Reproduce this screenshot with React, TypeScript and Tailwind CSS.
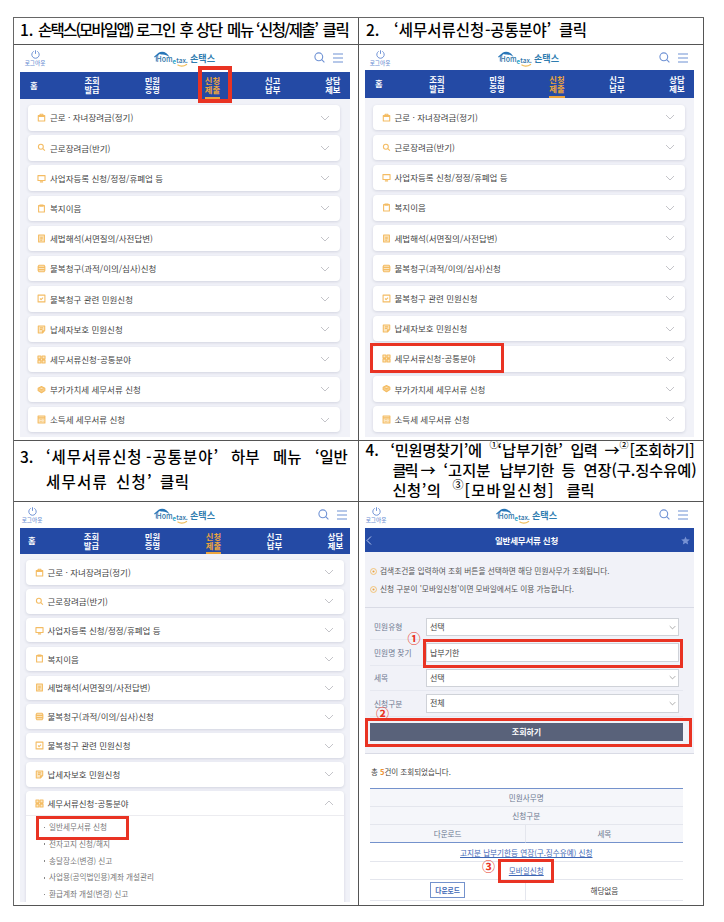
import React from 'react';
import { clsx } from 'clsx';

const MENU = [
  '근로 · 자녀장려금(정기)',
  '근로장려금(반기)',
  '사업자등록 신청/정정/휴폐업 등',
  '복지이음',
  '세법해석(서면질의/사전답변)',
  '불복청구(과적/이의/심사)신청',
  '불복청구 관련 민원신청',
  '납세자보호 민원신청',
  '세무서류신청-공통분야',
  '부가가치세 세무서류 신청',
  '소득세 세무서류 신청',
];

const TABS = [
  ['조회', '발급'],
  ['민원', '증명'],
  ['신청', '제출'],
  ['신고', '납부'],
  ['상담', '제보'],
];

const SUB_MENU = [
  '일반세무서류 신청',
  '전자고지 신청/해지',
  '송달장소(변경) 신고',
  '사업용(공익법인용)계좌 개설관리',
  '환급계좌 개설(변경) 신고',
];

const TINT = '#fbe6c2';

const MENU_ICONS: React.ReactNode[] = [
  <path d="M2 4h10v8.500H2zM4.800 4V2h4.400v2M2 5.500h10" />,
  <path d="M6 2a3.800 3.800 0 1 0 0 7.600a3.800 3.800 0 0 0 0-7.600M9 8.700l3.300 3.300" />,
  <path d="M1.500 2.500h11v7.500h-11zM4.500 12.300h5" />,
  <path d="M2.500 2.500h9v10h-9zM4.500 1.500h5v1.800h-5z" />,
  <path fill={TINT} d="M2.500 1.500h9v11h-9zM5 5h4M5 7.300h4M5 9.600h3" />,
  <path fill={TINT} d="M3 2h8l1.200 2v6L11 12H3l-1.200-2V4zM2 5.300h10M2 8.700h10" />,
  <path d="M1.700 1.700h10.600v10.600H1.700zM4.700 7l1.700 1.700 3-3" />,
  <path fill={TINT} d="M2 1.500h10v7l-3.500 4H2zM4.500 4.500h5M4.500 7h4M8.500 12V9H12" />,
  <path fill={TINT} d="M1.500 1.500H6V6H1.500zM8 1.500h4.500V6H8zM1.500 8H6v4.500H1.500zM8 8h4.500v4.500H8z" />,
  <path fill="#f8cd86" d="M7 2.500l5.200 2.700v3.600L7 12 1.800 8.800V5.200zM4 5.600L7 7.500l3-1.900" />,
  <path fill={TINT} d="M1.700 1.500h10.600v11H1.700zM2 4.500h10M4.500 7h1M7 7h1M9.500 7h.5M4.500 10h1M7 10h1M9.500 10h.5" />,
];

const MenuIcon: React.FC<{ index: number }> = ({ index }) => (
  <svg className="h-[9px] w-[9px] shrink-0 text-[#f4bc63]" viewBox="0 0 14 14" fill="none" stroke="currentColor" strokeWidth={1.7} strokeLinejoin="round">
    {MENU_ICONS[index]}
  </svg>
);

const Chevron: React.FC<{ up?: boolean; className?: string }> = ({ up, className }) => (
  <svg className={clsx('shrink-0', className, up && 'rotate-180')} viewBox="0 0 10 6" fill="none" stroke="currentColor" strokeWidth={1}>
    <path d="M1 1l4 4 4-4" />
  </svg>
);

const Logo: React.FC = () => (
  <svg className="h-[18px] w-[62px] shrink-0" viewBox="0 0 62 18">
    <path d="M0 5.700L4.600 1.800C8-.7 13.500 1 15.600 6.300 13 4 10.200 3.300 7.600 3.600L5.200 2.900.8 6.400z" fill="#2876b8" />
    <path d="M2.300 5.500v5M2.300 5.500l3-2.300" stroke="#2876b8" strokeWidth=".9" fill="none" />
    <text x="2.600" y="11" fontSize="7.600" textLength="16" lengthAdjust="spacingAndGlyphs" fontWeight="500" fill="#2d73a8">Hom</text>
    <text x="18.500" y="13" fontSize="6" fontWeight="700" fill="#28a2c8">e</text>
    <text x="22.300" y="12.200" fontSize="7.200" textLength="11.500" lengthAdjust="spacingAndGlyphs" fontWeight="500" fill="#2d73a8">tax.</text>
    <path d="M23.500 13.800q4.500 3 9.500-.6" stroke="#f1bd59" strokeWidth="1.100" fill="none" />
    <text x="36" y="11.300" fontSize="9.200" textLength="25" lengthAdjust="spacingAndGlyphs" fontWeight="700" fill="#2f7db0">손택스</text>
  </svg>
);

interface TopBarProps {
  className: string;
  logoutClass: string;
  logoClass: string;
  rightClass: string;
}

const TopBar: React.FC<TopBarProps> = ({ className, logoutClass, logoClass, rightClass }) => (
  <div className={clsx('flex shrink-0 items-start bg-white text-[#6f92d4]', className)}>
    <div className={clsx('flex w-[22px] shrink-0 flex-col items-center pt-[5px]', logoutClass)}>
      <svg className="h-[9px] w-[9px]" viewBox="0 0 10 10" fill="none" stroke="currentColor" strokeWidth={1.1}>
        <path d="M3 1.500a4.100 4.100 0 1 0 4 0M5 .3v4" />
      </svg>
      <span className="mt-[1px] text-[5.600px] leading-[7px] font-medium whitespace-nowrap">로그아웃</span>
    </div>
    <div className={clsx('pt-[6px]', logoClass)}>
      <Logo />
    </div>
    <div className={clsx('ml-auto flex items-center gap-[8px] pt-[7px]', rightClass)}>
      <svg className="h-[11px] w-[11px]" viewBox="0 0 11 11" fill="none" stroke="#6f92d4" strokeWidth={1.100}>
        <circle cx="4.800" cy="4.800" r="3.900" />
        <path d="M7.700 7.700l2.700 2.700" />
      </svg>
      <svg className="h-[10px] w-[10px]" viewBox="0 0 10 10" stroke="#6f92d4" strokeWidth={1.2}>
        <path d="M0 1h10M0 5h10M0 9h10" />
      </svg>
    </div>
  </div>
);

const TabBar: React.FC<{ className: string; homeClass: string; tabClass: string }> = ({ className, homeClass, tabClass }) => (
  <div className={clsx('flex shrink-0 overflow-hidden bg-[#244aa5] text-[8.300px] leading-[8.700px] font-bold text-white', className)}>
    <div className={clsx('flex shrink-0 items-center', homeClass)}>홈</div>
    {TABS.map(([top, bottom]) => (
      <div key={top} className={clsx('flex shrink-0 flex-col items-center justify-center', tabClass)}>
        <div className={clsx('flex h-full flex-col justify-center', top === '신청' && 'border-b-2 border-[#eba43e] pt-[2px] text-[#eba43e]')}>
          <span>{top}</span>
          <span>{bottom}</span>
        </div>
      </div>
    ))}
  </div>
);

const MenuRow: React.FC<{ index: number; className: string; open?: boolean }> = ({ index, className, open }) => (
  <div className={clsx('flex items-center text-[8.500px] text-[#444]', className)}>
    <MenuIcon index={index} />
    <span className="ml-[4px] whitespace-nowrap">{MENU[index]}</span>
    <Chevron up={open} className="ml-auto h-[6px] w-[10px] text-[#c4c4c9]" />
  </div>
);

const MenuList: React.FC<{ className: string }> = ({ className }) => (
  <div className={clsx('min-h-0 flex-1 overflow-hidden bg-[#f1f2f8]', className)}>
    <div className="flex flex-col gap-[4.700px]">
      {MENU.map((label, i) => (
        <MenuRow key={label} index={i} className="h-[25.500px] rounded-[4px] bg-white pr-[10px] pl-[9px] shadow-[0_1px_3px_rgba(90,95,130,0.2)]" />
      ))}
    </div>
  </div>
);

const RedBox: React.FC<{ className: string }> = ({ className }) => (
  <div className={clsx('pointer-events-none absolute border-[#e93323]', className)} />
);

const FieldRow: React.FC<{ label: string; value: string; select?: boolean }> = ({ label, value, select }) => (
  <div className="flex h-[25.400px] items-center border-b border-[#e6e8f0]">
    <span className="w-[56px] shrink-0 pl-[4px] text-[7.700px] text-[#6c7890]">{label}</span>
    <div className="flex h-[18.500px] w-[253px] items-center border border-[#cfd2d8] bg-white pr-[2px] pl-[3px] text-[8px] text-[#444]">
      {value}
      {select && <Chevron className="ml-auto h-[5px] w-[7px] text-[#888]" />}
    </div>
  </div>
);

const Info: React.FC<{ children: React.ReactNode }> = ({ children }) => (
  <div className="flex h-[18px] items-center text-[7.700px] whitespace-nowrap text-[#555]">
    <svg className="mr-[3px] h-[7px] w-[7px]" viewBox="0 0 8 8">
      <circle cx="4" cy="4" r="3.400" fill="none" stroke="#f1bd68" />
      <circle cx="4" cy="4" r="1.200" fill="#eba43e" />
    </svg>
    {children}
  </div>
);

const Marker: React.FC<{ className: string; children: React.ReactNode }> = ({ className, children }) => (
  <span className={clsx('absolute text-[13px] leading-[13px] font-bold text-[#e93323]', className)}>{children}</span>
);

const HEADING = 'whitespace-nowrap font-medium text-black';
const CELL = 'relative overflow-hidden border-r border-b border-[#555]';

export default function App() {
  return (
    <div className="h-[922px] w-[724px] overflow-hidden bg-white pt-[17px] pl-[13px] font-['Noto_Sans_CJK_KR','Noto_Sans',sans-serif]" lang="ko">
      <div className="grid w-[691px] grid-cols-[345px_345px] grid-rows-[27px_396px_61px_404px] border-t border-l border-[#666]">
        <div className={clsx(CELL, HEADING, 'flex items-center pb-[2px] pl-[6px] text-[15.500px]')}>
          <span className="w-[18px] shrink-0">1.</span>
          <span className="w-[98px] shrink-0 tracking-[-1.800px]">손택스(모바일앱)</span>
          <span className="w-[43.500px] shrink-0 tracking-[-1.300px]">로그인</span>
          <span className="w-[16.500px] shrink-0">후</span>
          <span className="w-[31px] shrink-0 tracking-[-1.300px]">상단</span>
          <span className="w-[29px] shrink-0 tracking-[-1.300px]">메뉴</span>
          <span className="w-[66.500px] shrink-0 tracking-[-1.600px]">‘신청/제출’</span>
          <span className="tracking-[-1.300px]">클릭</span>
        </div>
        <div className={clsx(CELL, HEADING, 'flex items-center pb-[2px] pl-[7px] text-[15.500px]')}>
          <span className="w-[28px] shrink-0">2.</span>
          <span className="w-[91px] shrink-0">‘세무서류신청</span>
          <span className="w-[74px] shrink-0 tracking-[-0.200px]">-공통분야’</span>
          <span className="tracking-[-0.500px]">클릭</span>
        </div>

        <div className={CELL}>
          <div className="ml-[6px] flex h-[391.500px] w-[329.500px] flex-col">
            <TopBar className="h-[26.500px]" logoutClass="ml-[4px]" logoClass="ml-[108px]" rightClass="pr-[7px]" />
            <TabBar className="h-[27px]" homeClass="w-[42px] pl-[10px]" tabClass="w-[60.200px]" />
            <MenuList className="pt-[6.500px] pr-[9.500px] pl-[8px]" />
          </div>
          <RedBox className="top-[21px] left-[183.500px] h-[37px] w-[34.500px] border-4" />
        </div>
        <div className={CELL}>
          <div className="ml-[6px] flex h-[391.500px] w-[329px] flex-col">
            <TopBar className="h-[25px]" logoutClass="ml-[4px]" logoClass="ml-[107px]" rightClass="pr-[6px]" />
            <TabBar className="h-[27.500px]" homeClass="w-[42px] pl-[10px]" tabClass="w-[60px]" />
            <MenuList className="pt-[7px] pr-[9px] pl-[7.500px]" />
          </div>
          <RedBox className="top-[297.500px] left-[11px] h-[30.500px] w-[134px] border-[3px]" />
        </div>

        <div className={clsx(CELL, HEADING, 'flex flex-col pl-[6px] text-[15.500px] leading-[25px]')}>
          <div className="flex pt-[3px]">
            <span className="w-[26px] shrink-0">3.</span>
            <span className="w-[100px] shrink-0 tracking-[0.900px]">‘세무서류신청</span>
            <span className="w-[85px] shrink-0 tracking-[1px]">-공통분야’</span>
            <span className="w-[42px] shrink-0">하부</span>
            <span className="w-[42px] shrink-0">메뉴</span>
            <span className="tracking-[-0.200px]">‘일반</span>
          </div>
          <div className="flex pl-[26px]">
            <span className="w-[70px] shrink-0 tracking-[1.200px]">세무서류</span>
            <span className="w-[44px] shrink-0 tracking-[1.200px]">신청’</span>
            <span className="tracking-[0.500px]">클릭</span>
          </div>
        </div>
        <div className={clsx(CELL, HEADING, 'flex flex-col pl-[6.500px] text-[15.300px] leading-[20px]')}>
          <div className="-mt-[2px] flex">
            <span className="w-[25px] shrink-0">4.</span>
            <span className="w-[99px] shrink-0 tracking-[-0.300px]">‘민원명찾기’에</span>
            <span className="-mt-[4px] w-[8px] shrink-0 text-[9px]">①</span>
            <span className="w-[73px] shrink-0">‘납부기한’</span>
            <span className="w-[34px] shrink-0 tracking-[-0.800px]">입력</span>
            <span className="w-[15px] shrink-0">→</span>
            <span className="-mt-[4px] w-[10px] shrink-0 text-[9px]">②</span>
            <span className="tracking-[-0.400px]">[조회하기]</span>
          </div>
          <div className="flex pl-[27px]">
            <span className="w-[28px] shrink-0 tracking-[-2px]">클릭</span>
            <span className="w-[23px] shrink-0">→</span>
            <span className="w-[56px] shrink-0">‘고지분</span>
            <span className="w-[62px] shrink-0 tracking-[-0.500px]">납부기한</span>
            <span className="w-[22px] shrink-0">등</span>
            <span className="tracking-[-0.100px]">연장(구.징수유예)</span>
          </div>
          <div className="flex pl-[27px]">
            <span className="w-[60px] shrink-0 tracking-[0.500px]">신청’의</span>
            <span className="-mt-[5px] w-[12px] shrink-0 text-[11px]">③</span>
            <span className="w-[102px] shrink-0 tracking-[1.300px]">[모바일신청]</span>
            <span>클릭</span>
          </div>
        </div>

        <div className={CELL}>
          <div className="ml-[6px] flex h-[399.500px] w-[329.500px] flex-col overflow-hidden">
            <TopBar className="h-[25.500px]" logoutClass="ml-[1px]" logoClass="ml-[111px]" rightClass="pr-[3px]" />
            <TabBar className="h-[26.500px]" homeClass="w-[41px] pl-[8px]" tabClass="w-[61px]" />
            <div className="min-h-0 flex-1 overflow-hidden bg-[#f1f2f8] pt-[6px] pr-[6px] pl-[5.500px]">
              <div className="flex flex-col gap-[4.200px]">
                {MENU.slice(0, 8).map((label, i) => (
                  <MenuRow key={label} index={i} className="h-[24.700px] rounded-[4px] bg-white pr-[10px] pl-[9px] shadow-[0_1px_3px_rgba(90,95,130,0.2)]" />
                ))}
                <div className="h-[150px] rounded-[4px] bg-white shadow-[0_1px_3px_rgba(90,95,130,0.2)]">
                  <MenuRow index={8} open className="h-[25px] border-b border-[#ececf0] pr-[10px] pl-[9px]" />
                  <ul className="pt-[3px] pl-[18px] text-[7.600px] leading-[16.800px] text-[#777]">
                    {SUB_MENU.map((label) => (
                      <li key={label} className="flex items-center gap-[4px] whitespace-nowrap">
                        <i className="h-[1.500px] w-[1.500px] bg-[#888]" />
                        {label}
                      </li>
                    ))}
                  </ul>
                </div>
              </div>
            </div>
          </div>
          <RedBox className="top-[314px] left-[21.500px] h-[23.500px] w-[93.500px] border-[3px]" />
        </div>

        <div className={CELL}>
          <div className="ml-[6px] flex w-[329px] flex-col">
            <TopBar className="h-[26px]" logoutClass="" logoClass="ml-[109px]" rightClass="pr-[6px]" />
            <div className="flex h-[24px] items-center justify-between bg-[#244aa5] pr-[4px] pl-[1px]">
              <svg className="h-[9px] w-[6px]" viewBox="0 0 6 9" fill="none" stroke="#b9c8ee">
                <path d="M5 .5l-4 4 4 4" />
              </svg>
              <span className="text-[8.500px] font-bold tracking-[-0.200px] text-white">일반세무서류 신청</span>
              <svg className="h-[9px] w-[9px]" viewBox="0 0 24 24" fill="#7691d3">
                <path d="M12 1l3.200 7.500 8.300.8-6.200 5.400 1.800 8.100L12 18.500l-7.100 4.300 1.800-8.100L.5 9.300l8.300-.8z" />
              </svg>
            </div>
            <div className="h-[55.500px] border-b border-[#d9dbe5] bg-[#f1f2f8] pt-[10px] pl-[5px]">
              <Info>검색조건을 입력하여 조회 버튼을 선택하면 해당 민원사무가 조회됩니다.</Info>
              <Info>신청 구분이 '모바일신청'이면 모바일에서도 이용 가능합니다.</Info>
            </div>
            <div className="h-[146px] border-b border-[#d9dbe5] bg-[#f1f2f8] pt-[7.500px] pr-[11px] pl-[5px]">
              <FieldRow label="민원유형" value="선택" select />
              <FieldRow label="민원명 찾기" value="납부기한" />
              <FieldRow label="세목" value="선택" select />
              <FieldRow label="신청구분" value="전체" select />
              <div className="mt-[6px] flex h-[18px] items-center justify-center bg-[#59627a] text-[8px] font-bold text-white">조회하기</div>
            </div>
            <div className="flex h-[34px] items-center pt-[3px] pl-[6px] text-[7.500px] text-[#444]">
              총&nbsp;<b className="text-[#ed9130]">5</b>건이 조회되었습니다.
            </div>
            <div className="ml-[5px] grid w-[312.500px] grid-cols-2 grid-rows-[18.700px_18.300px_18px_19px_18px_20.500px] border-t border-[#7492cc] text-[7.600px] text-[#6c7890] *:flex *:items-center *:justify-center *:border-b *:border-[#e4e6ed]">
              <div className="col-span-2 bg-[#f5f6fa]">민원사무명</div>
              <div className="col-span-2 bg-[#f5f6fa]">신청구분</div>
              <div className="border-r border-b-[#7492cc]! bg-[#f5f6fa]">다운로드</div>
              <div className="border-b-[#7492cc]! bg-[#f5f6fa]">세목</div>
              <div className="col-span-2 text-[#3e67b5] underline">고지분 납부기한등 연장(구.징수유예) 신청</div>
              <div className="col-span-2 text-[#3e67b5] underline">모바일신청</div>
              <div className="border-r">
                <span className="flex h-[15.500px] w-[35px] items-center justify-center border border-[#7492cc] text-[6.700px] font-bold text-[#3e67b5]">다운로드</span>
              </div>
              <div className="text-[#444]">해당없음</div>
            </div>
          </div>
          <RedBox className="top-[137px] left-[64px] h-[29px] w-[259.500px] border-[3px]" />
          <RedBox className="top-[216px] left-[5.500px] h-[29px] w-[327px] border-[3px]" />
          <RedBox className="top-[357px] left-[139px] h-[23.500px] w-[55.500px] border-[3px]" />
          <Marker className="top-[129px] left-[48.500px]">①</Marker>
          <Marker className="top-[203.500px] left-[17px]">②</Marker>
          <Marker className="top-[357px] left-[123px]">③</Marker>
        </div>
      </div>
    </div>
  );
}
